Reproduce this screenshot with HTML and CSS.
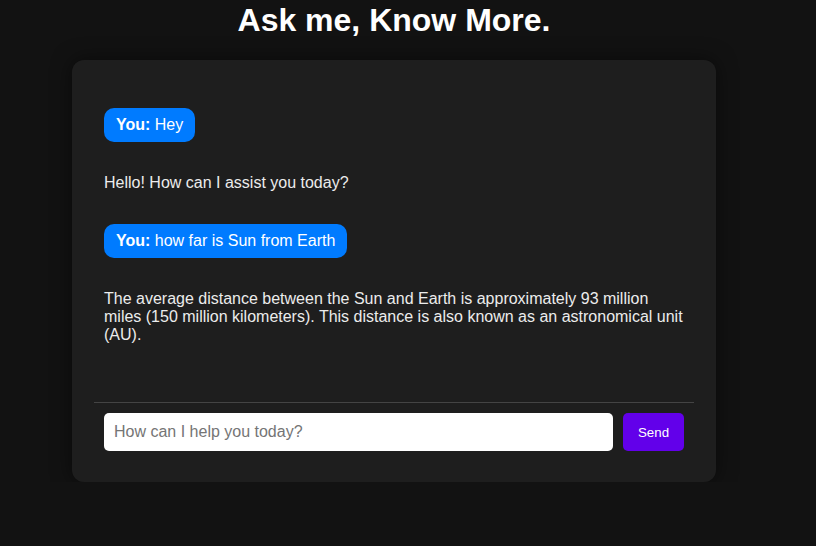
FILE: index.html
```html
<!DOCTYPE html>
<html lang="en">
<head>
<meta charset="utf-8">
<title>Ask me, Know More.</title>
<link rel="stylesheet" href="styles.css">
</head>
<body>
<div class="page">
  <h1 class="title">Ask me, Know More.</h1>
  <div class="chat-container">
    <div class="chat-box">
      <div class="msg user"><strong>You:</strong> Hey</div>
      <div class="msg bot">Hello! How can I assist you today?</div>
      <div class="msg user"><strong>You:</strong> how far is Sun from Earth</div>
      <div class="msg bot">The average distance between the Sun and Earth is approximately 93 million miles (150 million kilometers). This distance is also known as an astronomical unit (AU).</div>
    </div>
    <form class="input-area" onsubmit="return false">
      <input class="chat-input" type="text" placeholder="How can I help you today?">
      <button class="send-btn" type="submit">Send</button>
    </form>
  </div>
</div>
</body>
</html>
```

FILE: styles.css
```css
html, body {
  margin: 0;
  padding: 0;
  background: #121212;
  color: #ffffff;
  font-family: "Liberation Sans", Arial, sans-serif;
}

.page {
  width: 772px;
  margin-left: 8px;
  display: flex;
  flex-direction: column;
  align-items: center;
}

.title {
  margin: 2px 0 21px;
  font-size: 32px;
  font-weight: bold;
  line-height: 37px;
  color: #ffffff;
}

.chat-container {
  box-sizing: border-box;
  width: 644px;
  padding: 22px 22px 21px;
  background: #1e1e1e;
  border-radius: 12px;
  box-shadow: 0 0 20px rgba(0, 0, 0, 0.5);
}

.chat-box {
  box-sizing: border-box;
  height: 321px;
  padding: 26px 10px 10px;
  border-bottom: 1px solid #444444;
  display: flex;
  flex-direction: column;
  align-items: flex-start;
  gap: 24px;
  overflow: hidden;
}

.msg {
  font-size: 16px;
  line-height: normal;
}

.msg.user {
  background: #007bff;
  color: #ffffff;
  padding: 8px 12px;
  border-radius: 10px;
}

.msg.bot {
  color: #ececec;
  padding: 8px 0;
}

.input-area {
  display: flex;
  gap: 10px;
  padding: 10px;
  margin: 0;
}

.chat-input {
  flex: 1;
  height: 38px;
  box-sizing: border-box;
  padding: 0 10px;
  border: none;
  border-radius: 5px;
  background: #ffffff;
  font-family: "Liberation Sans", Arial, sans-serif;
  font-size: 16px;
  color: #222;
  outline: none;
}

.chat-input::placeholder {
  color: #757575;
}

.send-btn {
  width: 61px;
  height: 38px;
  border: none;
  border-radius: 5px;
  background: #6200ea;
  color: #ffffff;
  font-family: "Liberation Sans", Arial, sans-serif;
  font-size: 13.33px;
  padding: 0;
  cursor: pointer;
}
```
